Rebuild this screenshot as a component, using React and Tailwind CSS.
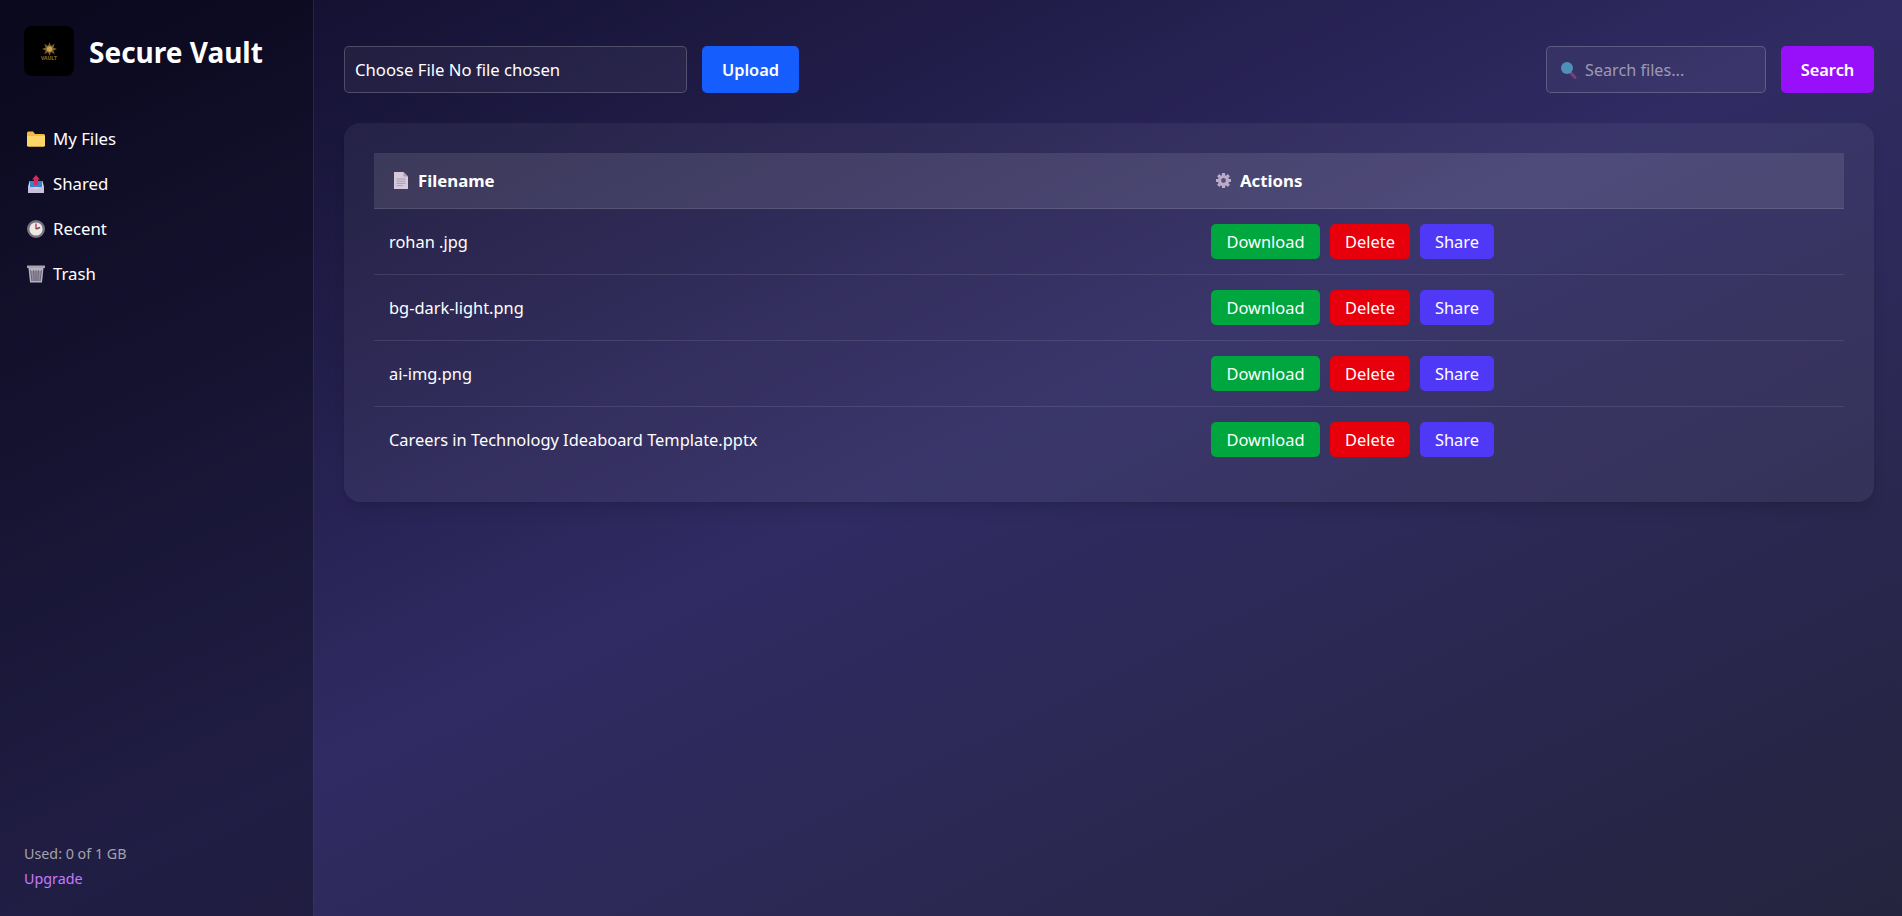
import React from 'react';

const files = [
  'rohan .jpg',
  'bg-dark-light.png',
  'ai-img.png',
  'Careers in Technology Ideaboard Template.pptx',
];

function FolderIcon() {
  return (
    <svg width="18" height="16" viewBox="0 0 18 16">
      <path d="M0 2 Q0 0.5 1.5 0.5 H6 L8 3 H16.5 Q18 3 18 4.5 V14 Q18 15.5 16.5 15.5 H1.5 Q0 15.5 0 14 Z" fill="#f9b93f" />
      <path d="M0 5 H18 V14 Q18 15.5 16.5 15.5 H1.5 Q0 15.5 0 14 Z" fill="#ffd468" />
    </svg>
  );
}

function OutboxIcon() {
  return (
    <svg width="16" height="18" viewBox="0 0 16 18">
      <path d="M1.5 6 H14.5 L16 12 V17 Q16 18 15 18 H1 Q0 18 0 17 V12 Z" fill="#d7cfe3" />
      <path d="M2 6 H14 V12 H2 Z" fill="#2f86cf" />
      <path d="M0 12 H4.5 L6 14 H10 L11.5 12 H16 V17 Q16 18 15 18 H1 Q0 18 0 17 Z" fill="#c9bfdc" />
      <path d="M8 0 L12 4.5 H10 V10 H6 V4.5 H4 Z" fill="#d8295e" />
    </svg>
  );
}

function ClockIcon() {
  return (
    <svg width="18" height="18" viewBox="0 0 18 18">
      <circle cx="9" cy="9" r="9" fill="#77747f" />
      <circle cx="9" cy="9" r="6.6" fill="#efe9e2" />
      <path d="M9 3.5 V9" stroke="#d8295e" strokeWidth="1.4" />
      <path d="M9 9 L13 7.5" stroke="#5b5560" strokeWidth="1.4" />
    </svg>
  );
}

function TrashIcon() {
  return (
    <svg width="18" height="18" viewBox="0 0 18 18">
      <path d="M0 0.5 H18 V3 H0 Z" fill="#a9a5b5" />
      <path d="M1.5 3 H16.5 L15 17.5 H3 Z" fill="#b5b1c1" />
      <path d="M3.5 5 L5 16 M6.5 5 L7.2 16 M9 5 V16 M11.5 5 L10.8 16 M14.5 5 L13 16 M3.5 7 H14.5 M3.7 9 H14.3 M4 11 H14 M4.2 13 H13.8 M4.4 15 H13.6" stroke="#5f5c6c" strokeWidth="0.8" />
    </svg>
  );
}

function PageIcon() {
  return (
    <svg width="14" height="17" viewBox="0 0 14 17">
      <path d="M0 0 H9.5 L14 4.5 V17 H0 Z" fill="#d6c9dd" />
      <path d="M9.5 0 L14 4.5 H9.5 Z" fill="#a99cb3" />
      <path d="M2.5 7 H11.5 M2.5 9.2 H11.5 M2.5 11.4 H11.5 M2.5 13.6 H9" stroke="#9d90a8" strokeWidth="0.8" />
    </svg>
  );
}

function GearIcon() {
  return (
    <svg width="17" height="17" viewBox="0 0 17 17">
      <path d="M8.5 1 V4 M8.5 13 V16 M1 8.5 H4 M13 8.5 H16 M3.2 3.2 L5.3 5.3 M11.7 11.7 L13.8 13.8 M13.8 3.2 L11.7 5.3 M5.3 11.7 L3.2 13.8" stroke="#b9abc9" strokeWidth="3.2" />
      <circle cx="8.5" cy="8.5" r="5.6" fill="#b9abc9" />
      <circle cx="8.5" cy="8.5" r="2.4" fill="#5a5170" />
    </svg>
  );
}

function SearchGlyph() {
  return (
    <svg width="17" height="18" viewBox="0 0 17 18">
      <path d="M10.5 11.5 L15 16.5" stroke="#7b3f78" strokeWidth="3" strokeLinecap="round" />
      <circle cx="7" cy="7" r="6" fill="#4e90b8" />
    </svg>
  );
}

function LogoMark() {
  return (
    <div className="flex h-[50px] w-[50px] shrink-0 flex-col items-center justify-center rounded-lg bg-black">
      <svg width="15" height="14" viewBox="0 0 20 18">
        <path d="M10 0 L12 5 L17 2 L15 7 L20 9 L15 11 L17 16 L12 13 L10 18 L8 13 L3 16 L5 11 L0 9 L5 7 L3 2 L8 5 Z" fill="#7d642b" />
        <circle cx="10" cy="9" r="3.6" fill="#c9a352" />
      </svg>
      <span className="text-[5px] leading-[5px] font-bold text-[#8a7336]">VAULT</span>
    </div>
  );
}

function NavItem({ icon, label }) {
  return (
    <a className="flex h-[45px] items-center gap-[8px] pl-[3px] text-[16.8px] text-white">
      <span className="flex w-[18px] justify-center">{icon}</span>
      {label}
    </a>
  );
}

function FileRow({ name }) {
  return (
    <tr className="border-b border-white/10 last:border-b-0">
      <td className="px-[15px] pt-[16px] pb-[14px] text-[16.4px] text-white">{name}</td>
      <td className="px-[15px] py-[15px]">
        <div className="flex gap-[10px]">
          <button className="h-[35px] w-[109px] rounded-[5px] bg-[#00a63e] pt-[2px] text-[16.4px] text-white">Download</button>
          <button className="h-[35px] w-[80px] rounded-[5px] bg-[#e7000b] pt-[2px] text-[16.4px] text-white">Delete</button>
          <button className="h-[35px] w-[74px] rounded-[5px] bg-[#4f39f6] pt-[2px] text-[16.4px] text-white">Share</button>
        </div>
      </td>
    </tr>
  );
}

export default function App() {
  return (
    <div className="flex h-[916px] overflow-hidden bg-[linear-gradient(to_bottom_right,#0f0c29,#302b63,#24243e)] font-['Noto_Sans',sans-serif]">
      <aside className="flex w-[314px] shrink-0 flex-col justify-between border-r border-white/10 bg-black/30 px-[24px] pt-[26px] pb-[27px]">
        <div>
          <div className="flex items-center gap-[15px]">
            <LogoMark />
            <h1 className="pt-[2px] text-[28px] font-bold text-white">Secure Vault</h1>
          </div>
          <nav className="mt-[40px] flex flex-col">
            <NavItem icon={<FolderIcon />} label="My Files" />
            <NavItem icon={<OutboxIcon />} label="Shared" />
            <NavItem icon={<ClockIcon />} label="Recent" />
            <NavItem icon={<TrashIcon />} label="Trash" />
          </nav>
        </div>
        <div className="text-[14.3px]">
          <p className="text-[#a3a3a8]">Used: 0 of 1 GB</p>
          <a className="mt-[3px] block text-[#c27aff]">Upgrade</a>
        </div>
      </aside>

      <main className="min-w-0 flex-1 pt-[46px] pr-[28px] pl-[30px]">
        <div className="flex items-center justify-between">
          <div className="flex items-center gap-[15px]">
            <div className="flex h-[47px] w-[343px] items-center rounded-[5px] border border-white/20 bg-white/5 px-[10px] pt-[1px] text-[16.7px] text-white">
              Choose File No file chosen
            </div>
            <button className="h-[47px] w-[97px] rounded-[5px] bg-[#155dfc] pt-[2px] text-[16.4px] font-semibold text-white">Upload</button>
          </div>
          <div className="flex items-center gap-[15px]">
            <div className="flex h-[47px] w-[220px] items-center gap-[8px] rounded-[5px] border border-white/20 bg-white/5 pl-[13px] text-[16.2px] text-white/50">
              <SearchGlyph />
              <span className="pt-[2px]">Search files...</span>
            </div>
            <button className="h-[47px] w-[93px] rounded-[5px] bg-[#9810fa] pt-[2px] text-[16.4px] font-semibold text-white">Search</button>
          </div>
        </div>

        <div className="mt-[30px] rounded-2xl bg-white/5 p-[30px] shadow-lg">
          <table className="w-full table-fixed border-collapse">
            <thead>
              <tr className="border-b border-white/20 bg-white/10">
                <th className="h-[55px] w-[822px] px-[15px] text-left text-[16.8px] font-bold text-white">
                  <span className="flex items-center gap-[10px] pl-[5px]"><PageIcon />Filename</span>
                </th>
                <th className="h-[55px] px-[15px] text-left text-[16.8px] font-bold text-white">
                  <span className="flex items-center gap-[8px] pl-[4px]"><GearIcon />Actions</span>
                </th>
              </tr>
            </thead>
            <tbody>
              {files.map((f) => (
                <FileRow key={f} name={f} />
              ))}
            </tbody>
          </table>
        </div>
      </main>
    </div>
  );
}
